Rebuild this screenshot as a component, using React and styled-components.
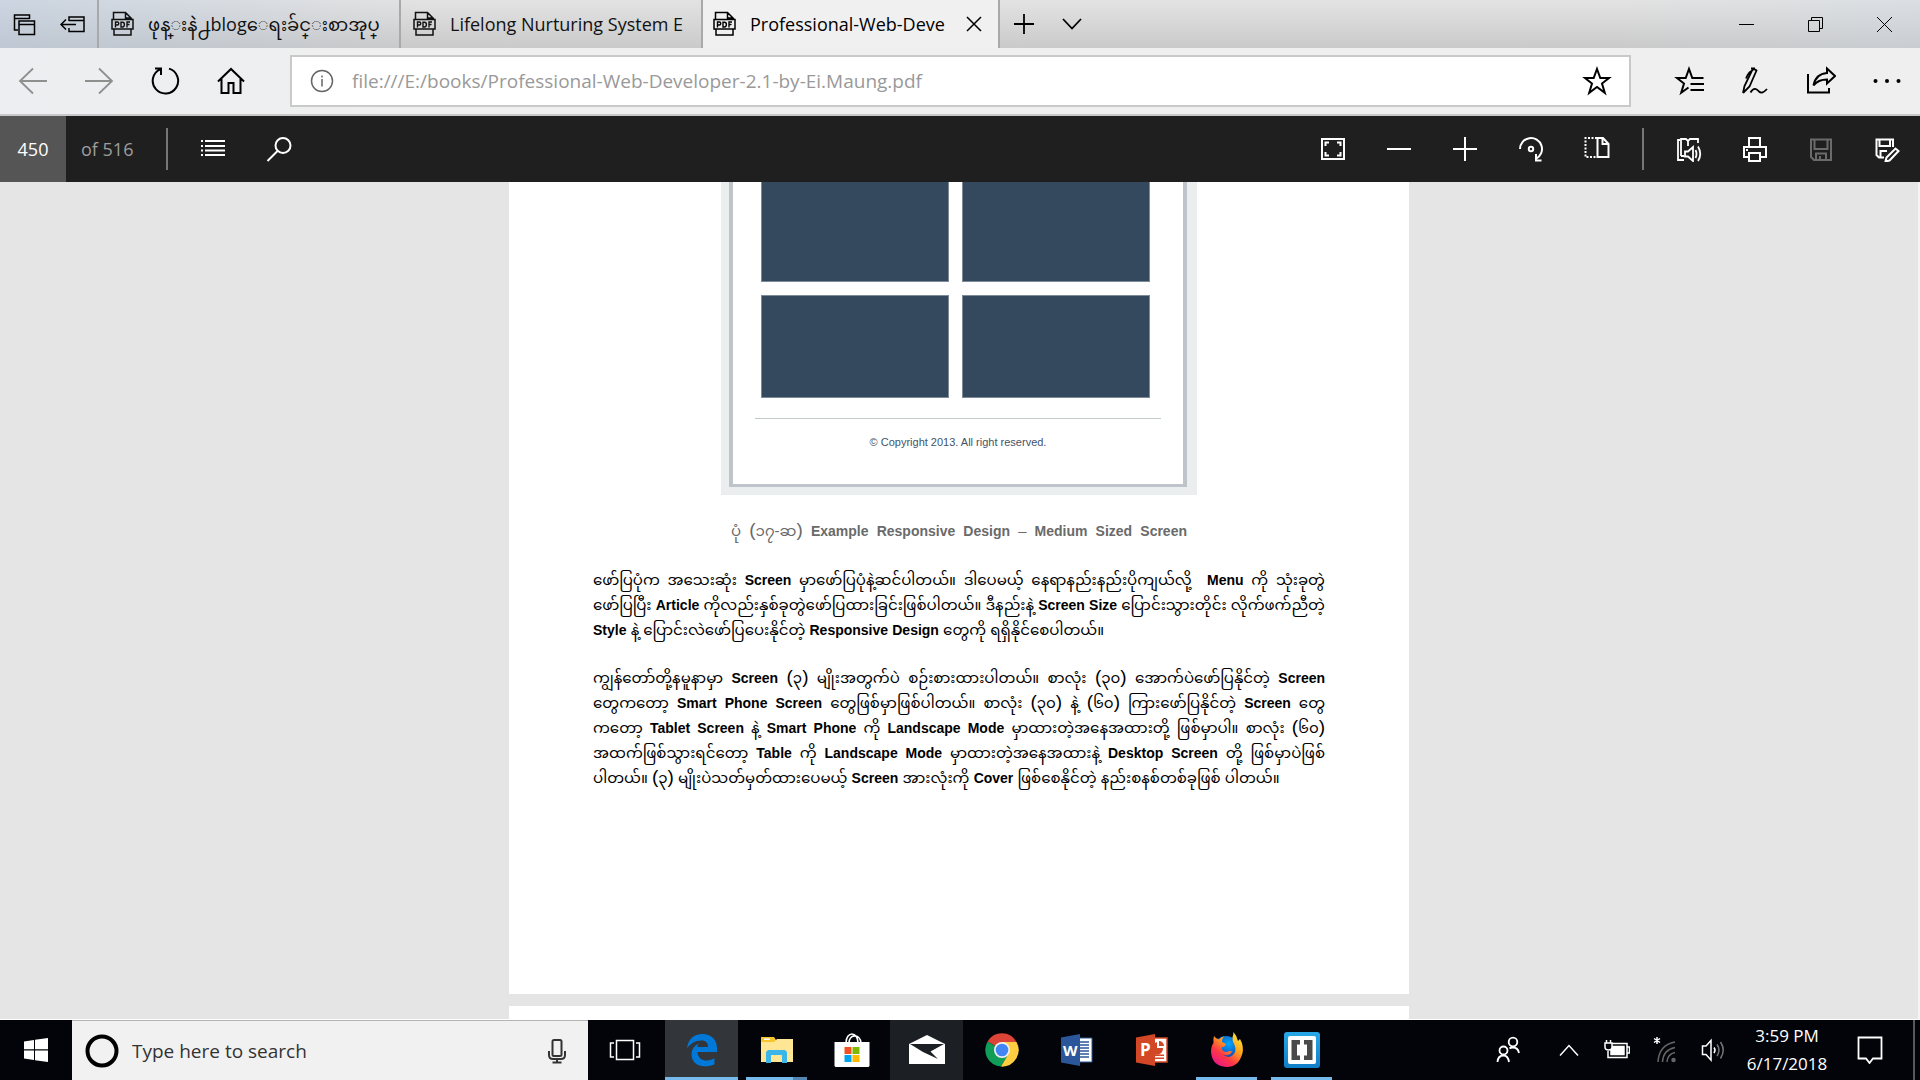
import React from "react";
import styled, { createGlobalStyle } from "styled-components";

const UI = `"Open Sans", "Noto Sans", "Noto Sans Myanmar", "Padauk", sans-serif`;
const DOC = `"Liberation Sans", "Noto Sans Myanmar", "Padauk", sans-serif`;

const Global = createGlobalStyle`
  * { box-sizing: border-box; }
  body { margin: 0; background: #e5e5e5; font-family: ${UI}; }
  button, input { font: inherit; color: inherit; border: 0; padding: 0; margin: 0; background: none; outline: none; border-radius: 0; }
  svg { display: block; flex: none; }
`;

const Screen = styled.div`
  display: flex;
  flex-direction: column;
  height: 100vh;
  overflow: hidden;
`;

/* ---------- tab strip ---------- */
const TabStrip = styled.header`
  flex: none;
  display: flex;
  height: 48px;
  padding-right: 1px;
  background:
    linear-gradient(90deg, rgba(176, 196, 222, 0.45), rgba(200, 208, 220, 0) 22%, rgba(200, 208, 220, 0) 84%, rgba(200, 212, 226, 0.3)),
    linear-gradient(#e3e3e3, #cacaca);
`;
const IconButton = styled.button`
  flex: none;
  display: flex;
  align-items: center;
  justify-content: center;
  width: ${(p) => p.$w || 66}px;
  height: 100%;
  color: ${(p) => p.$color || "inherit"};
`;
const Tab = styled.div`
  flex: none;
  display: flex;
  align-items: center;
  gap: 14px;
  width: 302px;
  padding-left: 12px;
  padding-right: 14px;
  border-left: 2px solid #a9a9a9;
  color: #111;
  ${(p) => p.$active && `width: 299px; background: #f0f0f0; border-right: 2px solid #a9a9a9; padding-left: 10px; color: #000;`}
`;
const TabTitle = styled.button`
  flex: 1;
  min-width: 0;
  overflow: hidden;
  white-space: nowrap;
  text-align: left;
  font-size: 18px;
  line-height: 46px;
`;
const Spacer = styled.div`
  flex: 1;
`;

/* ---------- navigation bar ---------- */
const NavBar = styled.nav`
  flex: none;
  display: flex;
  align-items: center;
  height: 68px;
  border-bottom: 2px solid #c8c8c8;
  background: linear-gradient(90deg, #eceef1, #efefef 20%, #efefef);
`;
const AddressBox = styled.div`
  flex: 1;
  display: flex;
  align-items: center;
  height: 52px;
  margin-left: 26px;
  margin-right: 25px;
  border: 2px solid #c9c9c9;
  background: #fff;
`;
const AddressInput = styled.input`
  flex: 1;
  min-width: 0;
  font-size: 19px;
  color: #999;
`;

/* ---------- reader bar ---------- */
const ReaderBar = styled.div`
  flex: none;
  display: flex;
  align-items: center;
  height: 66px;
  background: #1f1f1f;
  color: #fff;
`;
const PageInput = styled.input`
  width: 66px;
  height: 100%;
  background: #555;
  text-align: center;
  font-size: 18px;
`;
const PageTotal = styled.label`
  width: 88px;
  padding-left: 15px;
  font-size: 18px;
  color: #9d9d9d;
`;
const Divider = styled.div`
  width: 2px;
  height: 42px;
  margin: 0 12px;
  background: #767676;
`;

/* ---------- document ---------- */
const Viewport = styled.main`
  flex: 1;
  min-height: 0;
  overflow: hidden;
  display: flex;
  flex-direction: column;
  align-items: center;
  gap: 12px;
  border-right: 2px solid #f4f4f4;
  border-bottom: 1px solid #fff;
  background: #e5e5e5;
`;
const Page = styled.article`
  flex: none;
  width: 900px;
  min-height: 60px;
  padding: 0 84px ${(p) => p.$bottom || 0}px;
  background: #fff;
  font-family: ${DOC};
`;
const Figure = styled.figure`
  margin: 0;
  display: flex;
  flex-direction: column;
  align-items: center;
`;
const Frame = styled.div`
  width: 476px;
  padding: 0 10px 8px 8px;
  background: #eaeeef;
`;
const FrameInner = styled.div`
  border: 4px solid #bfc4ca;
  border-top: 0;
  border-bottom-width: 3px;
  padding: 0 22px 35px;
  background: #fff;
`;
const Tiles = styled.div`
  display: grid;
  grid-template-columns: 188px 188px;
  grid-template-rows: 100px 103px;
  gap: 13px;
  padding: 0 6px 20px;
`;
const Tile = styled.div`
  background: #34495e;
  border: 1px solid #7d8b99;
  border-top-width: ${(p) => (p.$cut ? 0 : 1)}px;
`;
const Copyright = styled.p`
  margin: 0;
  padding-top: 16px;
  border-top: 1px solid #c3cacb;
  text-align: center;
  font-size: 11px;
  line-height: 14px;
  color: #3f5468;
`;
const Caption = styled.figcaption`
  margin-top: 23px;
  width: 456px;
  font-size: 15px;
  line-height: 25px;
  color: #6a6a6a;
  white-space: nowrap;
  text-align: justify;
  text-align-last: justify;
`;
const Paragraph = styled.p`
  margin: 23px 0 0;
  font-size: 15px;
  line-height: 25px;
  color: #000;
`;
const Line = styled.span`
  display: block;
  height: 25px;
  white-space: nowrap;
  text-align: justify;
  text-align-last: ${(p) => (p.$last ? "left" : "justify")};
`;
const Latin = styled.span`
  font-size: 14px;
  font-weight: 700;
`;
const Paren = styled.span`
  font-size: 19px;
  line-height: 1px;
`;

/* ---------- taskbar ---------- */
const Taskbar = styled.footer`
  flex: none;
  display: flex;
  align-items: center;
  height: 60px;
  background: #020409;
  color: #fff;
`;
const SearchBox = styled.label`
  flex: none;
  display: flex;
  align-items: center;
  width: 516px;
  height: 100%;
  margin-right: 4px;
  padding-left: 12px;
  padding-right: 21px;
  border-top: 1px solid #b4b4b4;
  background: #f1f1f1;
  color: #333;
  margin-right: 0;
`;
const SearchInput = styled.input`
  flex: 1;
  margin-left: 12px;
  font-size: 19px;
  &::placeholder { color: #333; opacity: 1; }
`;
const Apps = styled.div`
  display: flex;
  height: 100%;
  margin-left: 4px;
`;
const AppButton = styled.button`
  flex: none;
  display: flex;
  align-items: center;
  justify-content: center;
  width: 73px;
  height: 100%;
  margin-right: 2px;
  background: ${(p) => p.$bg || "none"};
`;
const AppCell = styled.div`
  position: relative;
  height: 100%;
`;
const Underline = styled.div`
  position: absolute;
  left: ${(p) => (p.$full ? 0 : 6)}px;
  right: ${(p) => (p.$full ? 2 : 8)}px;
  bottom: 0;
  height: 3px;
  background: #76b9ed;
  border-right: ${(p) => (p.$stack ? "14px solid #5287b2" : "0")};
`;
const Clock = styled.time`
  width: 100px;
  text-align: center;
  font-size: 17px;
  line-height: 28px;
  white-space: pre-line;
`;
const ShowDesktop = styled.button`
  width: 7px;
  height: 100%;
  margin-left: 10px;
  border-left: 2px solid #55585c;
`;

/* ---------- icons ---------- */
const Ico = ({ w = 28, h = w, sw = 2, children, fill = "none" }) => (
  <svg width={w} height={h} viewBox={`0 0 ${w} ${h}`} fill={fill} stroke="currentColor" strokeWidth={sw} aria-hidden="true">
    {children}
  </svg>
);

const TabsAside = () => (
  <Ico w={24} sw={1.5}>
    <path d="M6 18H2.500V3H17.500V7M2.500 6.500H17.500M7 9H22.500V22.500H7zM7 12.500H22.500" />
  </Ico>
);
const SetAside = () => (
  <Ico w={26} h={24} sw={1.5}>
    <path d="M9 9V5H24V19.500H9V16M9 8.500H24M1 12.500H16M6 7.500L1 12.500L6 17.500" />
  </Ico>
);
const PdfIcon = () => (
  <Ico w={23} h={26} sw={1.5}>
    <path d="M2.500 8V1.500H14.500L20.500 7.500V8M14.500 1.500V7H20.500M1 8.500H22V18H1zM3 18V24H20V18" />
    <path d="M4.500 16.500V11H6.300Q7.800 11 7.800 12.500Q7.800 14 6.300 14H4.500M10 11.200H11.500Q13.400 11.200 13.400 13.600Q13.400 16 11.500 16H10zM16 16.500V11H19M16 13.500H18.500" strokeWidth="1.400" />
  </Ico>
);
const Back = () => <Ico w={30} h={28} sw={1.8}><path d="M29 14H2M15 1.500L2 14L15 26.500" /></Ico>;
const Forward = () => <Ico w={30} h={28} sw={1.8}><path d="M1 14H28M15 1.500L28 14L15 26.500" /></Ico>;
const Refresh = () => (
  <Ico w={30}><path d="M19 2.600A12.700 12.700 0 1 1 10 3.300M5 2.500H11V9" /></Ico>
);
const Home = () => (
  <Ico w={30}><path d="M2 15.500L15 3L28 15.500M5.500 13V27H12.500V17H17.500V27H24.500V13" /></Ico>
);
const Info = () => (
  <Ico w={24} sw={1.5}><circle cx="12" cy="12" r="10.500" /><path d="M12 10V17.500M12 6.500V8.500" /></Ico>
);
const Star = () => (
  <Ico w={30}><path d="M15 3L18.300 12H27L20 17.500L22.800 26.800L15 21L7.200 26.800L10 17.500L3 12H11.700z" /></Ico>
);
const FavList = () => (
  <Ico w={30}><path d="M29.500 12H18.300L15 3L11.700 12H3L10 17.500L7.200 26.800L14.500 21.500M16.500 18H30M16.500 24H30" /></Ico>
);
const Pen = () => (
  <Ico w={28} sw={1.8}>
    <path d="M2 26L3.500 19L11 3.500Q13 1 15.500 3.500L8.500 19.500L2 26M11.500 4Q8.500 3.500 5 11.500M10 1.500L14 1.500M9.500 25.500C13 19.500 16 22 18 24.500Q21 27.500 26 22" />
  </Ico>
);
const Share = () => (
  <Ico w={30}><path d="M2 8V26.500H23V22M21 2.500L29 10L21 17.500V13.500Q12 13.500 7.500 19.500Q9.500 8 21 7z" /></Ico>
);
const Dots = () => (
  <Ico w={28} fill="currentColor" sw={0}><circle cx="2.500" cy="14" r="2" /><circle cx="14" cy="14" r="2" /><circle cx="25.500" cy="14" r="2" /></Ico>
);
const Contents = () => (
  <Ico w={24} h={20}><path d="M4 2H24M4 7H24M4 11.500H24M4 16H24M0 2H2M0 7H2M0 11.500H2M0 16H2" /></Ico>
);
const Search = () => (
  <Ico w={26}><circle cx="17" cy="9.500" r="7.500" /><path d="M11.500 15L1.500 25" /></Ico>
);
const Fit = () => (
  <Ico w={24} h={22}><path d="M1 1H23V21H1z" /><path d="M4.500 8V4.500H8M16 4.500H19.500V8M19.500 14V17.500H16M8 17.500H4.500V14" /></Ico>
);
const Minus = () => <Ico w={24}><path d="M0 12H24" /></Ico>;
const Plus = () => <Ico w={24}><path d="M0 12H24M12 0V24" /></Ico>;
const Rotate = () => (
  <Ico w={26}><path d="M2 13A11 11 0 1 1 18 22.800M18 18V24.500H23.500" /><circle cx="13" cy="13" r="2.200" /></Ico>
);
const Layout = () => (
  <Ico w={26}>
    <path d="M13 2H1.500V21H13" strokeDasharray="2 1.500" />
    <path d="M13.500 2H19L24.500 8V21H13.500zM18.500 2V8H24" />
  </Ico>
);
const ReadAloud = () => (
  <Ico w={26} sw={1.8}>
    <path d="M4 4H2V24H8M5 20V3H10L12 5L14 3H22V7M12 5V10M5 20H8" />
    <path d="M9 15.500H12L17 11V25L12 20.500H9zM19.500 14Q21.500 18 19.500 22M22 10.500Q26.500 18 22 25" />
  </Ico>
);
const Print = () => (
  <Ico w={26}><path d="M7 11V2H18V11M7 21H2V11H24V21H18M7 17H18V25H7zM4 14H6" /></Ico>
);
const Save = () => (
  <Ico w={26}><path d="M3 3.500H23V24H6L3 21zM6.500 3.500V13H19.500V3.500M8 24V17.500H18V24M12 20V24" /></Ico>
);
const SaveAs = () => (
  <Ico w={26}>
    <path d="M10 21.500H5L2.500 19V3.500H19V11M5.500 3.500V10H16V3.500M6.500 21V15H13" />
    <path d="M11.500 25.500L12.500 21.500L21.500 12.500L24.500 15L15.500 24.500z" />
  </Ico>
);
const StartLogo = () => (
  <Ico w={24} fill="#fff" sw={0}><path d="M0 3.500L10 2V11.300H0zM11 1.800L24 0V11.300H11zM0 12.500H10V22L0 20.500zM11 12.500H24V24L11 22.200z" /></Ico>
);
const Mic = () => (
  <Ico w={20} h={26}><rect x="5.500" y="2" width="9" height="16" rx="1.500" /><path d="M2 13V17Q2 21 6 21H14Q18 21 18 17V13M10 21V24.500M5.500 24.500H14.500" /></Ico>
);
const TaskView = () => (
  <Ico w={32} h={22} sw={1.500}><path d="M7.500 1.500H24.500V20.500H7.500zM5 4H1.500V18H5M27 4H30.500V18H27" /></Ico>
);
const EdgeLogo = () => (
  <svg width="32" height="34" viewBox="0 0 32 34" aria-hidden="true">
    <path fill="#0078d7" d="M1 15.500C2 6 8 1 16.500 1C26 1 31 7.500 31 15V19H11.500C11.800 25 16 27.500 20.500 27.500C24 27.500 26.500 26.500 28.500 25.300V31.300C25.500 32.700 22.500 33.300 18.500 33.300C10 33.300 5.500 28 5.500 21.500C5.500 16.500 8.500 12.500 13 10.300C12 11.500 11.500 12.700 11.300 14H22C22 10 20 7.500 15.500 7.500C9 7.500 4 11 1 15.500z" />
  </svg>
);
const Explorer = () => (
  <svg width="32" height="30" viewBox="0 0 32 30" aria-hidden="true">
    <path fill="#f8c62c" d="M0 2H13L15 5H17V8H0z" />
    <path fill="#ffe694" d="M0 7H13L16 4H32V27H0z" />
    <path fill="#fff" d="M3 3.500H9V5H3z" />
    <path fill="#3cb5e8" d="M5 17L7 15H24L26 17V28H21V20H10V28H5z" />
  </svg>
);
const Store = () => (
  <svg width="36" height="36" viewBox="0 0 36 36" aria-hidden="true">
    <path fill="none" stroke="#fff" strokeWidth="1.600" d="M12 11C12 -1 24 -1 24 11M15 11C15 2 26 1 27 11" />
    <path fill="#fff" d="M.5 10H35.500V34L34.500 35H1.500L.5 34z" />
    <path fill="#f25022" d="M10.500 15H17.500V22H10.500z" /><path fill="#7fba00" d="M18.500 15H25.500V22H18.500z" />
    <path fill="#00a4ef" d="M10.500 23H17.500V30H10.500z" /><path fill="#ffb900" d="M18.500 23H25.500V30H18.500z" />
  </svg>
);
const Mail = () => (
  <svg width="36" height="30" viewBox="0 0 36 30" aria-hidden="true">
    <path fill="#fff" d="M0 9L18 0L36 9V29H0z" />
    <path fill="#1c1f23" d="M1 9H35L21.500 16.500L29 24L14 17z" />
  </svg>
);
const Chrome = () => (
  <svg width="34" height="34" viewBox="0 0 34 34" aria-hidden="true">
    <path fill="#db4437" d="M17 17L2.600 8.500A16.600 16.600 0 0 1 31.500 8.900H17z" />
    <path fill="#0f9d58" d="M17 17L2.600 8.500A16.600 16.600 0 0 0 16 33.600L23.500 21z" />
    <path fill="#ffcd40" d="M17 8.900H31.500A16.600 16.600 0 0 1 16 33.600L24 20z" />
    <circle cx="17" cy="17" r="8" fill="#f1f1f1" /><circle cx="17" cy="17" r="6.300" fill="#4285f4" />
  </svg>
);
const officeText = { fontFamily: "Open Sans", fontWeight: 700, fontSize: 15, fill: "#fff" };
const Word = () => (
  <svg width="32" height="32" viewBox="0 0 32 32" aria-hidden="true">
    <path fill="#fff" stroke="#2b579a" d="M18 4H31V28H18z" />
    <path stroke="#2b579a" strokeWidth="1.500" d="M19 8H28M19 11H28M19 14H28M19 17H28M19 20H28M19 23H28" />
    <path fill="#2b579a" d="M0 3.500L19 0V32L0 28.500z" />
    <text x="2" y="21.500" {...officeText}>W</text>
  </svg>
);
const PowerPoint = () => (
  <svg width="32" height="32" viewBox="0 0 32 32" aria-hidden="true">
    <path fill="#fff" stroke="#d24726" strokeWidth="1.500" d="M18 4H31V28H18z" />
    <path fill="#d24726" d="M19 9A6 6 0 1 0 27 14H21V8zM23 7V12H28A5 5 0 0 0 23 7zM19 20.500H28V22H19zM19 23.500H28V25H19z" />
    <path fill="#d24726" d="M0 3.500L19 0V32L0 28.500z" />
    <text x="4" y="22" {...officeText} fontSize="17">P</text>
  </svg>
);
const Firefox = () => (
  <svg width="34" height="36" viewBox="0 0 34 36" aria-hidden="true">
    <defs>
      <linearGradient id="fx" x1="0.900" y1="0" x2="0.200" y2="1">
        <stop offset="0" stopColor="#fff044" /><stop offset=".4" stopColor="#ffa31a" /><stop offset=".7" stopColor="#ff3647" /><stop offset="1" stopColor="#e5158c" />
      </linearGradient>
      <radialGradient id="fb" cx=".6" cy=".3" r=".7"><stop offset="0" stopColor="#00a8ff" /><stop offset="1" stopColor="#1b2a9c" /></radialGradient>
    </defs>
    <circle cx="16" cy="17" r="13" fill="url(#fb)" />
    <path fill="url(#fx)" d="M4 4Q6 7 9 7.500Q11 5 14 4.500Q11.500 7 12 10L16 12Q15 15 11.500 15.500Q12 20 17 20Q20 18.500 22 19.500Q19 25 13 22.500Q18 27 23 23Q27 19 24.500 13Q22 9 22.500 5Q23.500 2.500 23.500 0Q27 4 28 9L30 7Q34 14 32.500 21Q29 35 16.500 35Q2 34 1 20Q1 14 3.500 11Q3 7 4 4z" />
  </svg>
);
const Brackets = () => (
  <svg width="36" height="36" viewBox="0 0 36 36" aria-hidden="true">
    <defs><linearGradient id="bk" x1="0" y1="0" x2="0" y2="1"><stop offset="0" stopColor="#29a8e6" /><stop offset="1" stopColor="#0f7ec8" /></linearGradient></defs>
    <rect width="36" height="36" rx="3" fill="url(#bk)" />
    <rect x="4" y="4" width="28" height="28" rx="2" fill="#fff" />
    <path fill="#4a4a4a" d="M7.500 8H16V12.500H13V23.500H16V28H7.500zM20 8H28.500V28H20V23.500H23V12.500H20z" />
  </svg>
);
const People = () => (
  <Ico w={24} h={28} sw={1.800}>
    <circle cx="17" cy="6" r="4.300" /><path d="M23 17Q22 11.500 17 11.500Q14.500 11.500 13.500 12.500" />
    <circle cx="7.500" cy="14.500" r="4" /><path d="M1.500 26Q2 19.500 7.500 19.500Q12 19.500 13 26" />
  </Ico>
);
const ChevronUp = () => <Ico w={20} h={14} sw={1.500}><path d="M1 12.500L10 2.500L19 12.500" /></Ico>;
const Battery = () => (
  <Ico w={26} h={22} sw={1.500}>
    <path d="M8 4.500H23V18.500H4V12M23 8H25.500V14H23" /><path fill="currentColor" d="M7 7.500H20V15.500H7z" />
    <path fill="#020409" d="M1 4H8V8Q8 11 4.500 11Q1 11 1 8zM2.500 4V1M6.500 4V1" />
  </Ico>
);
const Wifi = () => (
  <Ico w={24} h={28} sw={1.500}>
    <g stroke="#666"><path d="M5 26Q6 9 22 6M9.500 26Q10 14 22 11.500M14 26Q14.500 18 22 16.500" /><circle cx="20.500" cy="24" r="1.500" fill="#666" /></g>
    <path d="M4 1V8M1 2.500L7 6.500M7 2.500L1 6.500" />
  </Ico>
);
const Volume = () => (
  <Ico w={24} h={24} sw={1.500}>
    <path d="M1.500 8H5L10 2.500V22L5 16.500H1.500zM13 9.500Q15 12 13 15" /><path stroke="#777" d="M16 6.500Q20 12 16 18M19.500 4Q25 12 19.500 20.500" />
  </Ico>
);
const Notification = () => (
  <Ico w={26} h={28} sw={1.800}><path d="M1.500 1.500H24.500V22.500H16L12.500 27L9 22.500H1.500z" /></Ico>
);

const TABS = [
  { title: "ဖုန္းနဲ႕blogေရးခ်င္းစာအုပ္" },
  { title: "Lifelong Nurturing System E" },
  { title: "Professional-Web-Deve", active: true },
];

const CAPTION = "ပုံ (၁၇-ဆ) Example Responsive Design – Medium Sized Screen";

const PARAGRAPHS = [
  [
    "ဖော်ပြပုံက အသေးဆုံး Screen မှာဖော်ပြပုံနဲ့ဆင်ပါတယ်။ ဒါပေမယ့် နေရာနည်းနည်းပိုကျယ်လို့ \u00a0Menu ကို သုံးခုတွဲ",
    "ဖော်ပြပြီး Article ကိုလည်းနှစ်ခုတွဲဖော်ပြထားခြင်းဖြစ်ပါတယ်။ ဒီနည်းနဲ့ Screen Size ပြောင်းသွားတိုင်း လိုက်ဖက်ညီတဲ့",
    "Style နဲ့ ပြောင်းလဲဖော်ပြပေးနိုင်တဲ့ Responsive Design တွေကို ရရှိနိုင်စေပါတယ်။",
  ],
  [
    "ကျွန်တော်တို့နမူနာမှာ Screen (၃) မျိုးအတွက်ပဲ စဉ်းစားထားပါတယ်။ စာလုံး (၃၀) အောက်ပဲဖော်ပြနိုင်တဲ့ Screen",
    "တွေကတော့ Smart Phone Screen တွေဖြစ်မှာဖြစ်ပါတယ်။ စာလုံး (၃၀) နဲ့ (၆၀) ကြားဖော်ပြနိုင်တဲ့ Screen တွေ",
    "ကတော့ Tablet Screen နဲ့ Smart Phone ကို Landscape Mode မှာထားတဲ့အနေအထားတို့ ဖြစ်မှာပါ။ စာလုံး (၆၀)",
    "အထက်ဖြစ်သွားရင်တော့ Table ကို Landscape Mode မှာထားတဲ့အနေအထားနဲ့ Desktop Screen တို့ ဖြစ်မှာပဲဖြစ်",
    "ပါတယ်။ (၃) မျိုးပဲသတ်မှတ်ထားပေမယ့် Screen အားလုံးကို Cover ဖြစ်စေနိုင်တဲ့ နည်းစနစ်တစ်ခုဖြစ် ပါတယ်။",
  ],
];

/* Latin words are set heavier than the Burmese around them, parentheses taller. */
const mixed = (text) =>
  text.split(/([A-Za-z]+|[()])/).map((part, i) => {
    if (/^[A-Za-z]/.test(part)) return <Latin key={i}>{part}</Latin>;
    if (/^[()]/.test(part)) return <Paren key={i}>{part}</Paren>;
    return part;
  });

const APPS = [
  { name: "Edge", Icon: EdgeLogo, bg: "#323539", line: "full" },
  { name: "File Explorer", Icon: Explorer, line: "stack" },
  { name: "Store", Icon: Store },
  { name: "Mail", Icon: Mail, bg: "#1c1f23" },
  { name: "Chrome", Icon: Chrome },
  { name: "Word", Icon: Word },
  { name: "PowerPoint", Icon: PowerPoint },
  { name: "Firefox", Icon: Firefox, line: "open" },
  { name: "Brackets", Icon: Brackets, line: "open" },
];

export default function App() {
  return (
    <Screen>
      <Global />
      <TabStrip>
        <IconButton $w={48} aria-label="Tabs set aside"><TabsAside /></IconButton>
        <IconButton $w={49} aria-label="Set tabs aside"><SetAside /></IconButton>
        {TABS.map((t) => (
          <Tab key={t.title} $active={t.active}>
            <PdfIcon />
            <TabTitle>{t.title}</TabTitle>
            {t.active && (
              <IconButton $w={20} aria-label="Close tab"><Ico w={16} sw={1.5}><path d="M1 1L15 15M15 1L1 15" /></Ico></IconButton>
            )}
          </Tab>
        ))}
        <IconButton $w={48} aria-label="New tab"><Ico w={20} sw={1.8}><path d="M0 10H20M10 0V20" /></Ico></IconButton>
        <IconButton $w={48} aria-label="Tab previews"><Ico w={20} h={12} sw={1.8}><path d="M1 1L10 10.500L19 1" /></Ico></IconButton>
        <Spacer />
        <IconButton $w={69} aria-label="Minimize"><Ico w={15} h={15} sw={1}><path d="M0 7.500H15" /></Ico></IconButton>
        <IconButton $w={69} aria-label="Restore"><Ico w={15} h={15} sw={1}><path d="M.5 3.500H11.500V14.500H.5zM3.500 3.500V.5H14.500V11.500H11.500" /></Ico></IconButton>
        <IconButton $w={69} aria-label="Close"><Ico w={15} h={15} sw={1}><path d="M0 0L15 15M15 0L0 15" /></Ico></IconButton>
      </TabStrip>

      <NavBar>
        <IconButton $color="#8f8f8f" aria-label="Back"><Back /></IconButton>
        <IconButton $color="#8f8f8f" aria-label="Forward"><Forward /></IconButton>
        <IconButton aria-label="Refresh"><Refresh /></IconButton>
        <IconButton aria-label="Home"><Home /></IconButton>
        <AddressBox>
          <IconButton $w={60} $color="#666" aria-label="Site information"><Info /></IconButton>
          <AddressInput aria-label="Address" defaultValue="file:///E:/books/Professional-Web-Developer-2.1-by-Ei.Maung.pdf" />
          <IconButton $w={64} aria-label="Add to favorites"><Star /></IconButton>
        </AddressBox>
        <IconButton aria-label="Hub"><FavList /></IconButton>
        <IconButton aria-label="Add notes"><Pen /></IconButton>
        <IconButton aria-label="Share"><Share /></IconButton>
        <IconButton aria-label="More"><Dots /></IconButton>
      </NavBar>

      <ReaderBar>
        <PageInput id="page" defaultValue="450" />
        <PageTotal htmlFor="page">of 516</PageTotal>
        <Divider />
        <IconButton aria-label="Contents"><Contents /></IconButton>
        <IconButton aria-label="Search"><Search /></IconButton>
        <Spacer />
        <IconButton aria-label="Fit to page"><Fit /></IconButton>
        <IconButton aria-label="Zoom out"><Minus /></IconButton>
        <IconButton aria-label="Zoom in"><Plus /></IconButton>
        <IconButton aria-label="Rotate"><Rotate /></IconButton>
        <IconButton aria-label="Layout"><Layout /></IconButton>
        <Divider />
        <IconButton aria-label="Read aloud"><ReadAloud /></IconButton>
        <IconButton aria-label="Print"><Print /></IconButton>
        <IconButton $color="#6b6b6b" aria-label="Save"><Save /></IconButton>
        <IconButton aria-label="Save as"><SaveAs /></IconButton>
      </ReaderBar>

      <Viewport>
        <Page $bottom={204}>
          <Figure>
            <Frame>
              <FrameInner>
                <Tiles><Tile $cut /><Tile $cut /><Tile /><Tile /></Tiles>
                <Copyright>© Copyright 2013. All right reserved.</Copyright>
              </FrameInner>
            </Frame>
            <Caption>{mixed(CAPTION)}</Caption>
          </Figure>
          {PARAGRAPHS.map((lines, i) => (
            <Paragraph key={i}>
              {lines.map((l, j) => (
                <Line key={j} $last={j === lines.length - 1}>{mixed(l)}</Line>
              ))}
            </Paragraph>
          ))}
        </Page>
        <Page />
      </Viewport>

      <Taskbar>
        <IconButton $w={72} aria-label="Start"><StartLogo /></IconButton>
        <SearchBox>
          <Ico w={36} sw={4}><circle cx="18" cy="18" r="14.500" stroke="#000" /></Ico>
          <SearchInput placeholder="Type here to search" />
          <Mic />
        </SearchBox>
        <IconButton $w={73} aria-label="Task view"><TaskView /></IconButton>
        <Apps>
          {APPS.map(({ name, Icon, bg, line }) => (
            <AppCell key={name}>
              <AppButton $bg={bg} aria-label={name}><Icon /></AppButton>
              {line && <Underline $full={line === "full"} $stack={line === "stack"} />}
            </AppCell>
          ))}
        </Apps>
        <Spacer />
        <IconButton $w={74} aria-label="People"><People /></IconButton>
        <IconButton $w={48} aria-label="Hidden icons"><ChevronUp /></IconButton>
        <IconButton $w={48} aria-label="Battery"><Battery /></IconButton>
        <IconButton $w={48} aria-label="Network"><Wifi /></IconButton>
        <IconButton $w={48} aria-label="Volume"><Volume /></IconButton>
        <Clock>{"3:59 PM\n6/17/2018"}</Clock>
        <IconButton $w={66} aria-label="Notifications"><Notification /></IconButton>
        <ShowDesktop aria-label="Show desktop" />
      </Taskbar>
    </Screen>
  );
}
